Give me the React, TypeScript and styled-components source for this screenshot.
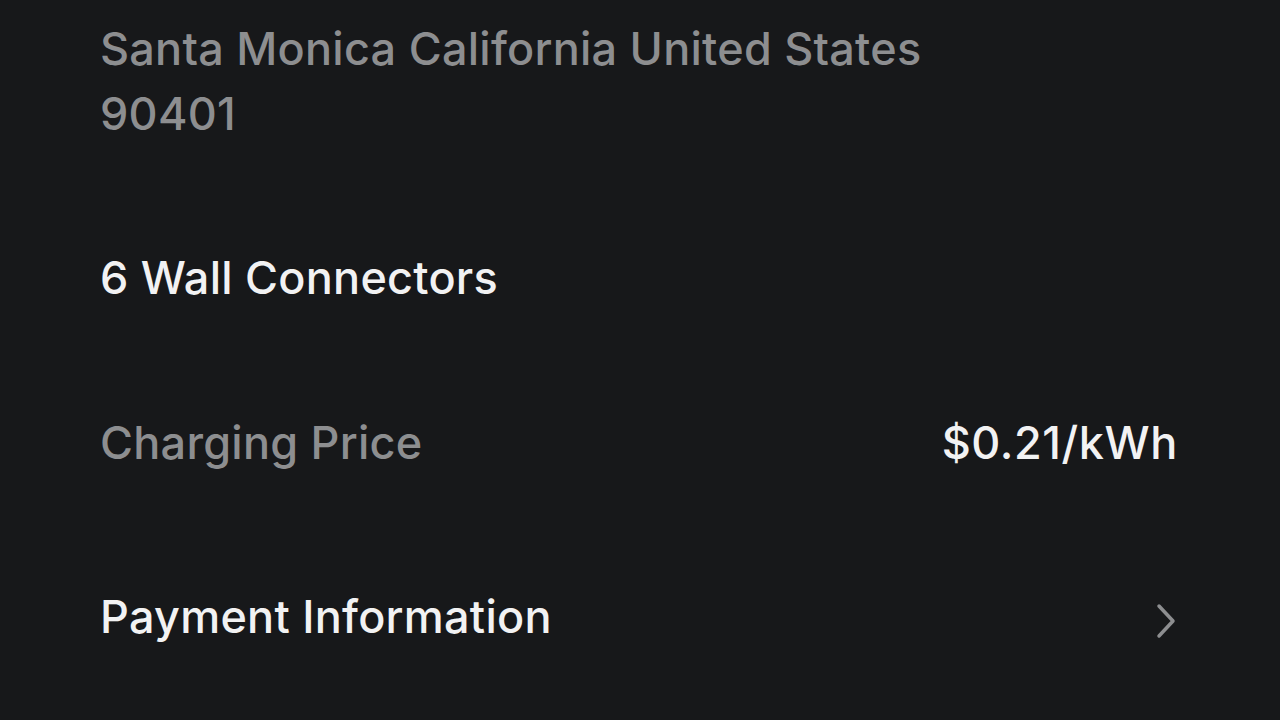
import React from "react";
import styled, { createGlobalStyle } from "styled-components";

const Global = createGlobalStyle`
  html, body { margin: 0; padding: 0; background: #17181a; }
  body { font-family: Inter, "Noto Sans", sans-serif; -webkit-font-smoothing: antialiased; }
`;

const Screen = styled.div`
  width: 1280px;
  height: 720px;
  overflow: hidden;
  background: #17181a;
  box-sizing: border-box;
  padding: 16px 102px 0 100px;
  display: flex;
  flex-direction: column;
`;

const Address = styled.div`
  color: #8d8e90;
  font-size: 45px;
  font-weight: 500;
  line-height: 65px;
  letter-spacing: 0.25px;
`;

const Row = styled.div<{ $gap: number }>`
  margin-top: ${(p) => p.$gap}px;
  display: flex;
  align-items: center;
  justify-content: space-between;
  height: 65px;
`;

const Label = styled.span<{ $muted?: boolean }>`
  color: ${(p) => (p.$muted ? "#8d8e90" : "#f2f2f3")};
  font-size: 45px;
  font-weight: 500;
  letter-spacing: 0.25px;
`;

const Value = styled.span`
  color: #f2f2f3;
  font-size: 45px;
  font-weight: 500;
  letter-spacing: 0.6px;
`;

const ChevronIcon = styled.svg`
  margin-top: 8px;
  flex: none;
`;

const Chevron = () => (
  <ChevronIcon width="24" height="40" viewBox="0 0 24 40" fill="none">
    <path d="M5 5 L19 20 L5 35" stroke="#8d8e90" strokeWidth="3.5" strokeLinecap="round" strokeLinejoin="round" />
  </ChevronIcon>
);

export default function App() {
  return (
    <>
      <Global />
      <Screen>
        <Address>
          Santa Monica California United States
          <br />
          90401
        </Address>
        <Row $gap={99}>
          <Label>6 Wall Connectors</Label>
        </Row>
        <Row $gap={100}>
          <Label $muted>Charging Price</Label>
          <Value>$0.21/kWh</Value>
        </Row>
        <Row $gap={109}>
          <Label>Payment Information</Label>
          <Chevron />
        </Row>
      </Screen>
    </>
  );
}
